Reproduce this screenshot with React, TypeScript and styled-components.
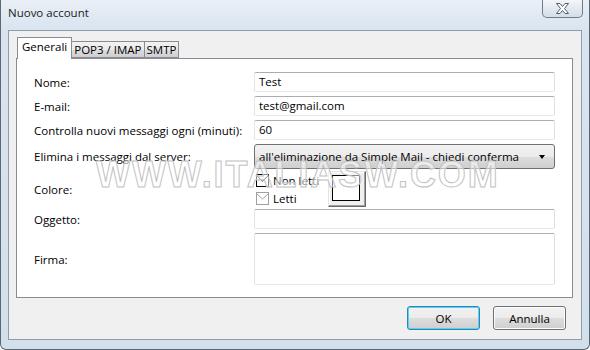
import styled, { createGlobalStyle } from "styled-components";

const GlobalStyle = createGlobalStyle`
  html, body {
    margin: 0;
    padding: 0;
    background: #ffffff;
  }
  body {
    font-family: "Open Sans", "Noto Sans", sans-serif;
    font-size: 11.5px;
    color: #000;
  }
`;

const Window = styled.div`
  position: relative;
  width: 590px;
  height: 350px;
  box-sizing: border-box;
  display: flex;
  flex-direction: column;
  background: linear-gradient(180deg, #e9eff6 0px, #d9e4ef 30px, #d3dfeb 100%);
  border: 1px solid #5b6877;
  border-top: none;
  border-radius: 0 0 6px 6px;
  overflow: hidden;
`;

const TitleBar = styled.div`
  height: 30px;
  display: flex;
  align-items: flex-start;
  padding: 0 6px 0 7px;
  flex: none;
`;

const Title = styled.div`
  padding-top: 5px;
  font-size: 11.5px;
  color: #1b1b1b;
`;

const CloseButton = styled.div`
  margin-left: auto;
  width: 41px;
  height: 18px;
  box-sizing: border-box;
  border: 1px solid #6f7c8b;
  border-top: none;
  border-radius: 0 0 5px 5px;
  background: linear-gradient(180deg, #f4f7fa 0%, #e2e9f1 50%, #d4dde8 100%);
  display: flex;
  align-items: center;
  justify-content: center;
`;

const Client = styled.div`
  margin: 0 7px;
  height: 310px;
  box-sizing: border-box;
  border: 1px solid #8e9cab;
  background: #f0f0f0;
  display: flex;
  flex-direction: column;
  padding: 6px 8px 0 7px;
`;

const TabStrip = styled.div`
  display: flex;
  align-items: flex-end;
  height: 21px;
  padding-left: 1px;
  position: relative;
  z-index: 1;
`;

const Tab = styled.div<{ $active?: boolean }>`
  box-sizing: border-box;
  height: ${({ $active }) => ($active ? "22px" : "17px")};
  margin-bottom: ${({ $active }) => ($active ? "-1px" : "0")};
  padding: ${({ $active }) => ($active ? "1px 4px 0 4px" : "0 2px")};
  border: 1px solid #898c95;
  border-bottom: ${({ $active }) => ($active ? "none" : "1px solid #898c95")};
  margin-left: ${({ $active }) => ($active ? "0" : "-1px")};
  background: ${({ $active }) =>
    $active ? "#ffffff" : "linear-gradient(180deg, #f2f2f2 0%, #ebebeb 50%, #dddddd 51%, #cfcfcf 100%)"};
  line-height: 15px;
  white-space: nowrap;
  &:first-child {
    margin-left: 0;
  }
`;

const Panel = styled.div`
  height: 240px;
  box-sizing: border-box;
  background: #ffffff;
  border: 1px solid #898c95;
  padding: 13px 17px 0 17px;
  display: flex;
  flex-direction: column;
`;

const Row = styled.div<{ $top: number }>`
  display: grid;
  grid-template-columns: 220px 1fr;
  align-items: center;
  margin-top: ${({ $top }) => $top}px;
`;

const Label = styled.div`
  white-space: nowrap;
`;

const TextBox = styled.div<{ $height?: number }>`
  height: ${({ $height }) => $height ?? 20}px;
  box-sizing: border-box;
  border: 1px solid;
  border-color: #abadb3 #dbdfe6 #e3e9ef #e2e3ea;
  border-radius: 2px;
  padding: 1px 0 0 4px;
  line-height: 16px;
  background: #fff;
`;

const Select = styled.div`
  height: 25px;
  box-sizing: border-box;
  border: 1px solid #707070;
  border-radius: 3px;
  background: linear-gradient(180deg, #f2f2f2 0%, #ebebeb 50%, #dddddd 51%, #cfcfcf 100%);
  display: flex;
  align-items: center;
  padding: 0 9px 0 4px;
`;

const SelectText = styled.span`
  flex: 1;
`;

const Arrow = styled.span`
  width: 0;
  height: 0;
  border-left: 3.5px solid transparent;
  border-right: 3.5px solid transparent;
  border-top: 4px solid #000;
`;

const ColorArea = styled.div`
  display: flex;
  align-items: flex-start;
  height: 36px;
`;

const CheckList = styled.div`
  width: 74px;
  display: flex;
  flex-direction: column;
  padding-top: 1px;
  gap: 2px;
`;

const CheckItem = styled.div`
  display: flex;
  align-items: center;
  gap: 4px;
  height: 16px;
  padding-left: 2px;
`;

const ColorButton = styled.div`
  width: 38px;
  height: 36px;
  box-sizing: border-box;
  background: #f0f0f0;
  border: 1px solid;
  border-color: #e3e3e3 #696969 #696969 #e3e3e3;
  box-shadow: inset -1px -1px 0 #a0a0a0, inset 1px 1px 0 #ffffff;
  display: flex;
  align-items: center;
  justify-content: center;
  padding: 0 3px 2px 1px;
`;

const Swatch = styled.div`
  width: 28px;
  height: 26px;
  box-sizing: border-box;
  border: 1px solid #000;
  background: #fff;
`;

const Footer = styled.div`
  display: flex;
  justify-content: flex-end;
  gap: 13px;
  padding: 8px 7px 0 0;
`;

const Button = styled.div<{ $default?: boolean }>`
  width: 73px;
  height: 24px;
  box-sizing: border-box;
  border: 1px solid ${({ $default }) => ($default ? "#3c7fb1" : "#707070")};
  border-radius: 3px;
  background: linear-gradient(180deg, #f2f2f2 0%, #ebebeb 50%, #dddddd 51%, #cfcfcf 100%);
  box-shadow: ${({ $default }) => ($default ? "inset 0 0 0 1px #48d8fb" : "inset 0 0 0 1px #fcfcfc")};
  display: flex;
  align-items: center;
  justify-content: center;
`;

const Watermark = styled.div`
  position: absolute;
  left: 95px;
  top: 154px;
  font-family: "Liberation Sans", Arial, sans-serif;
  font-weight: bold;
  font-size: 36px;
  letter-spacing: 1.9px;
  color: rgba(255, 255, 255, 0.55);
  -webkit-text-stroke: 1px #c2c2c2;
  pointer-events: none;
  white-space: nowrap;
`;

const CloseGlyph = () => (
  <svg width="15" height="11" viewBox="0 0 15 11">
    <path
      d="M1.5 0.5 L5 0.5 L7.5 3.5 L10 0.5 L13.5 0.5 L9.5 5.5 L13.5 10.5 L10 10.5 L7.5 7.5 L5 10.5 L1.5 10.5 L5.5 5.5 Z"
      fill="#ffffff"
      stroke="#505c69"
      strokeWidth="1"
      strokeLinejoin="round"
    />
  </svg>
);

const EnvelopeIcon = ({ color }: { color: string }) => (
  <svg width="13" height="13" viewBox="0 0 13 13">
    <rect x="0.5" y="0.5" width="12" height="12" fill="#fff" stroke={color} />
    <path d="M0.5 1.5 L6.5 7 L12.5 1.5" fill="none" stroke={color} />
  </svg>
);

export default function App() {
  return (
    <>
      <GlobalStyle />
      <Window>
        <TitleBar>
          <Title>Nuovo account</Title>
          <CloseButton>
            <CloseGlyph />
          </CloseButton>
        </TitleBar>
        <Client>
          <TabStrip>
            <Tab $active>Generali</Tab>
            <Tab>POP3 / IMAP</Tab>
            <Tab>SMTP</Tab>
          </TabStrip>
          <Panel>
            <Row $top={0}>
              <Label>Nome:</Label>
              <TextBox>Test</TextBox>
            </Row>
            <Row $top={4}>
              <Label>E-mail:</Label>
              <TextBox>test@gmail.com</TextBox>
            </Row>
            <Row $top={4}>
              <Label>Controlla nuovi messaggi ogni (minuti):</Label>
              <TextBox>60</TextBox>
            </Row>
            <Row $top={4}>
              <Label>Elimina i messaggi dal server:</Label>
              <Select>
                <SelectText>all'eliminazione da Simple Mail - chiedi conferma</SelectText>
                <Arrow />
              </Select>
            </Row>
            <Row $top={2}>
              <Label>Colore:</Label>
              <ColorArea>
                <CheckList>
                  <CheckItem>
                    <EnvelopeIcon color="#000" />
                    Non letti
                  </CheckItem>
                  <CheckItem>
                    <EnvelopeIcon color="#a0a0a0" />
                    Letti
                  </CheckItem>
                </CheckList>
                <ColorButton>
                  <Swatch />
                </ColorButton>
              </ColorArea>
            </Row>
            <Row $top={2}>
              <Label>Oggetto:</Label>
              <TextBox />
            </Row>
            <Row $top={4}>
              <Label>Firma:</Label>
              <TextBox $height={52} />
            </Row>
          </Panel>
          <Footer>
            <Button $default>OK</Button>
            <Button>Annulla</Button>
          </Footer>
        </Client>
        <Watermark>WWW.ITALIASW.COM</Watermark>
      </Window>
    </>
  );
}
